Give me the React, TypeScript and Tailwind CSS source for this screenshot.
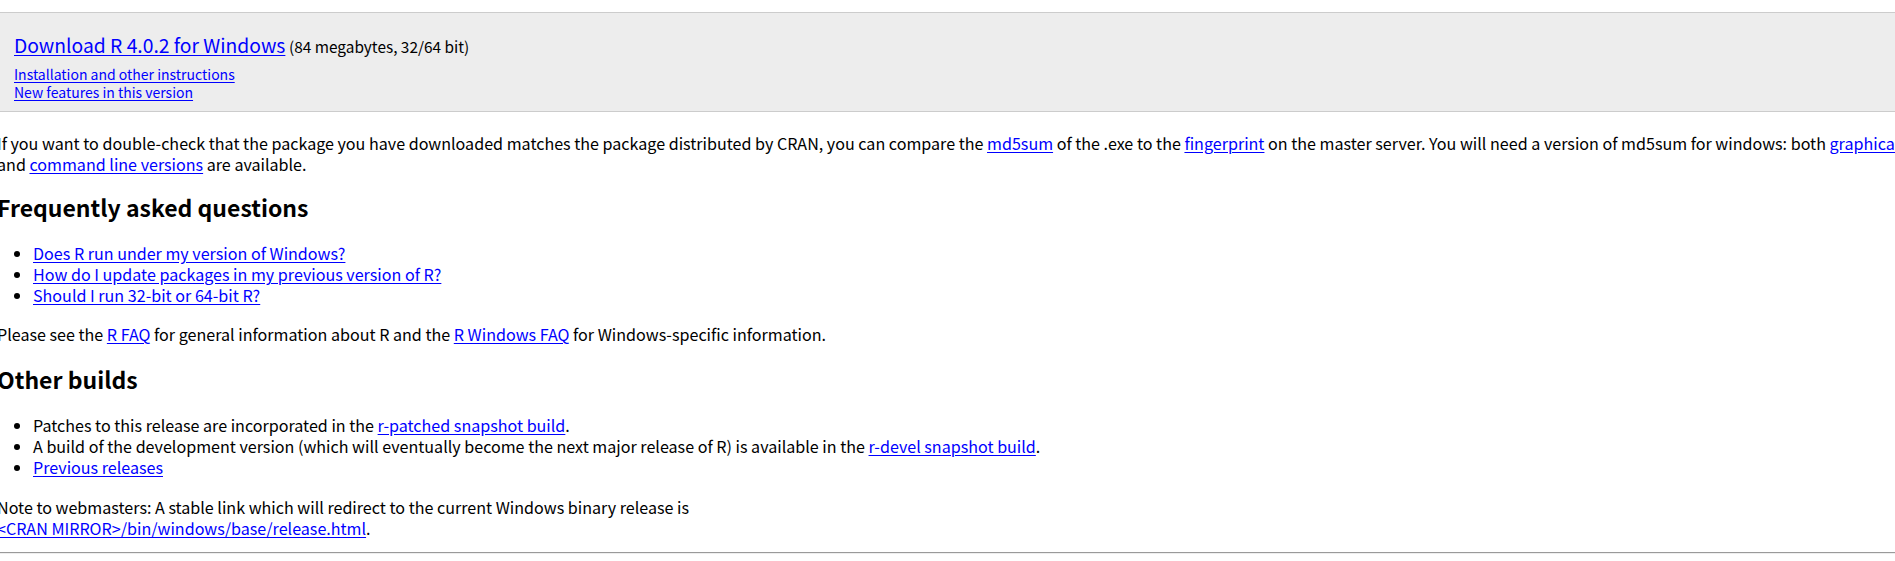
import React from 'react'

const A: React.FC<{ children: React.ReactNode }> = ({ children }) => (
  <a href="#" className="text-[#0000ff] underline underline-offset-2">
    {children}
  </a>
)

export default function App() {
  return (
    <div className="min-h-[561px] overflow-hidden bg-white text-black font-['Noto_Sans_CJK_KR','Noto_Sans',sans-serif]">
      {/* download box */}
      <div className="mt-[12px] -ml-[2px] w-[1910px] border-y border-[#cccccc] bg-[#ededed] pl-[16px] pt-[19px] pb-[10px]">
        <div className="leading-[26px] whitespace-nowrap">
          <A>
            <span className="text-[19.3px]">Download R 4.0.2 for Windows</span>
          </A>{' '}
          <span className="text-[15.4px]">(84 megabytes, 32/64 bit)</span>
        </div>
        <div className="mt-[6px] text-[14px] leading-[18px]">
          <div>
            <A>Installation and other instructions</A>
          </div>
          <div>
            <A>New features in this version</A>
          </div>
        </div>
      </div>

      <div className="-ml-[3px] w-[1910px] text-[16.1px] leading-[21px]">
        <p className="mt-[21px]">
          If you want to double-check that the package you have downloaded matches the package distributed by CRAN, you
          can compare the <A>md5sum</A> of the .exe to the <A>fingerprint</A> on the master server. You will need a
          version of md5sum for windows: both <A>graphical</A>
          <br />
          and <A>command line versions</A> are available.
        </p>

        <h2 className="mt-[17px] text-[23px] font-bold leading-[30px]">Frequently asked questions</h2>
        <ul className="mt-[21px] list-disc pl-[36px] leading-[21px]">
          <li>
            <A>Does R run under my version of Windows?</A>
          </li>
          <li>
            <A>How do I update packages in my previous version of R?</A>
          </li>
          <li>
            <A>Should I run 32-bit or 64-bit R?</A>
          </li>
        </ul>
        <p className="mt-[18px]">
          Please see the <A>R FAQ</A> for general information about R and the <A>R Windows FAQ</A> for
          Windows-specific information.
        </p>

        <h2 className="mt-[19px] text-[23px] font-bold leading-[30px]">Other builds</h2>
        <ul className="mt-[21px] list-disc pl-[36px] leading-[21px]">
          <li>
            Patches to this release are incorporated in the <A>r-patched snapshot build</A>.
          </li>
          <li>
            A build of the development version (which will eventually become the next major release of R) is available
            in the <A>r-devel snapshot build</A>.
          </li>
          <li>
            <A>Previous releases</A>
          </li>
        </ul>
        <p className="mt-[19px] leading-[20.5px]">
          Note to webmasters: A stable link which will redirect to the current Windows binary release is
          <br />
          <A>&lt;CRAN MIRROR&gt;/bin/windows/base/release.html</A>.
        </p>
      </div>
      <div className="mt-[14px] border-t border-b border-t-[#9a9a9a] border-b-[#eeeeee]" />
    </div>
  )
}
